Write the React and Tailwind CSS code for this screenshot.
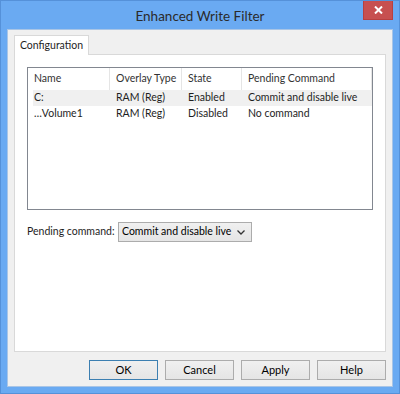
const columns = [
  { label: 'Name', w: 'w-[76px]' },
  { label: 'Overlay Type', w: 'w-[72px]' },
  { label: 'State', w: 'w-[60px]' },
  { label: 'Pending Command', w: 'flex-1' },
];

const rows = [
  { name: 'C:', type: 'RAM (Reg)', state: 'Enabled', cmd: 'Commit and disable live', selected: true },
  { name: '…Volume1', type: 'RAM (Reg)', state: 'Disabled', cmd: 'No command', selected: false },
];

const DialogButton = ({ children, focused }) => (
  <button
    className={`w-[69px] h-[20px] text-[11px] text-black whitespace-nowrap bg-gradient-to-b from-[#f0f0f0] to-[#e5e5e5] border ${
      focused ? 'border-[#3c7fb1]' : 'border-[#acacac]'
    }`}
  >
    {children}
  </button>
);

const App = () => {
  return (
    <div
      className="w-[400px] h-[394px] bg-[#6aaaf2] border border-[#5591d9] flex flex-col whitespace-nowrap"
      style={{ fontFamily: 'Lato, "Open Sans", sans-serif' }}
    >
      {/* Title bar */}
      <div className="relative h-[28px] flex items-center justify-center">
        <span className="text-[13.5px] text-[#2b2b2b] pt-[2px]">Enhanced Write Filter</span>
        <div className="absolute top-0 right-[6px] w-[30px] h-[19px] bg-[#c75050] border-x border-b border-[#b84040] flex items-center justify-center">
          <svg width="9" height="8" viewBox="0 0 9 8">
            <path d="M1 0.5 L8 7.5 M8 0.5 L1 7.5" stroke="white" strokeWidth="2" />
          </svg>
        </div>
      </div>

      {/* Client area */}
      <div className="flex-1 mx-[6px] mb-[6px] bg-[#f0f0f0] border border-[#a9c5e6] flex flex-col px-[6px] pt-[5px] text-[10.5px]">
        {/* Tab */}
        <div className="flex">
          <div className="relative z-10 -mb-px h-[20px] w-[75px] justify-center bg-white border border-b-0 border-[#d9d9d9] flex items-center text-[#1e1e1e]">
            Configuration
          </div>
        </div>
        <div className="h-[298px] bg-white border border-[#d9d9d9] px-[12px] pt-[12px]">
          {/* List view */}
          <div className="h-[143px] border border-[#828790] bg-white text-[#1e1e1e]">
            <div className="flex h-[22px] items-center pl-[6px]">
              {columns.map((c, i) => (
                <div
                  key={c.label}
                  className={`${c.w} h-full flex items-center ${i > 0 ? 'pl-[6px]' : ''} border-r border-[#e5e5e5] text-[#333]`}
                >
                  {c.label}
                </div>
              ))}
            </div>
            {rows.map((r) => (
              <div
                key={r.name}
                className={`flex h-[16px] items-center ml-[5px] pl-[1px] ${r.selected ? 'bg-[#f0f0f0]' : ''}`}
              >
                <div className="w-[76px]">{r.name}</div>
                <div className="w-[72px] pl-[6px]">{r.type}</div>
                <div className="w-[60px] pl-[6px]">{r.state}</div>
                <div className="pl-[6px]">{r.cmd}</div>
              </div>
            ))}
          </div>

          {/* Pending command */}
          <div className="flex items-center mt-[12px]">
            <span className="w-[91px] text-[#1e1e1e]">Pending command:</span>
            <div className="w-[134px] h-[20px] border border-[#acacac] bg-gradient-to-b from-[#f0f0f0] to-[#e5e5e5] flex items-center justify-between pl-[3px] pr-[6px] text-black">
              <span>Commit and disable live</span>
              <svg width="8" height="5" viewBox="0 0 8 5">
                <path d="M0.5 0.5 L4 4 L7.5 0.5" fill="none" stroke="#333" strokeWidth="1.3" />
              </svg>
            </div>
          </div>
        </div>

        {/* Buttons */}
        <div className="flex justify-end gap-[7px] mt-[8px]">
          <DialogButton focused>OK</DialogButton>
          <DialogButton>Cancel</DialogButton>
          <DialogButton>Apply</DialogButton>
          <DialogButton>Help</DialogButton>
        </div>
      </div>
    </div>
  );
};

export default App;
